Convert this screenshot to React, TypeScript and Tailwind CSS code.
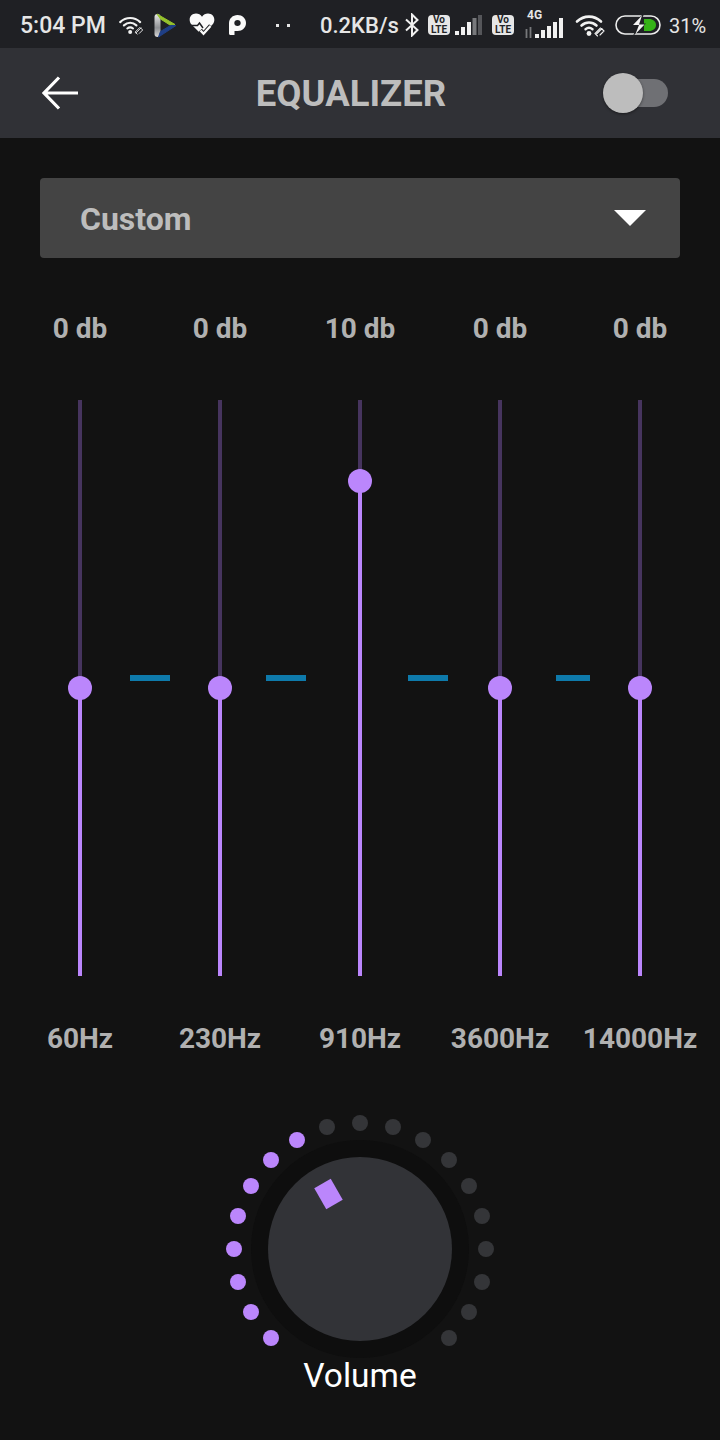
import React from "react";

const bands = [
  { db: "0 db", hz: "60Hz", top: 288 },
  { db: "0 db", hz: "230Hz", top: 288 },
  { db: "10 db", hz: "910Hz", top: 81 },
  { db: "0 db", hz: "3600Hz", top: 288 },
  { db: "0 db", hz: "14000Hz", top: 288 },
];

const dashes = ["left-[120px]", "left-[256px]", "left-[398px]", "left-[546px]"];

function Wifi({ className }: { className: string }) {
  return (
    <svg viewBox="0 0 30 24" className={className} fill="none" stroke="#f2f2f2" strokeLinecap="round">
      <path d="M2 8.5C9 2 19 2 26 8.5" strokeWidth="2.6" />
      <path d="M6.5 12.5C11 8.5 17 8.5 21.5 12.5" strokeWidth="2.6" />
      <path d="M10.5 16.2C12.8 14.4 15.2 14.4 17.5 16.2" strokeWidth="2.4" />
      <circle cx="14" cy="20.5" r="2.4" fill="#f2f2f2" stroke="none" />
      <path d="M21 21.5L27 15.5M22.5 23L20 20.5L25.5 15M25 22L29 18L26.5 15.5" strokeWidth="1.1" />
    </svg>
  );
}

function VoLte({ className }: { className: string }) {
  return (
    <div className={`flex h-5 w-[22px] shrink-0 flex-col items-center justify-center rounded-[4px] bg-[#e6e6e6] font-['Roboto',sans-serif] text-[10px] leading-[10px] font-bold text-[#222327] ${className}`}>
      <span>Vo</span>
      <span>LTE</span>
    </div>
  );
}

function Signal({ className }: { className: string }) {
  const bars = [
    { x: 0, h: 4, c: "#f0f0f0" },
    { x: 6, h: 8, c: "#f0f0f0" },
    { x: 12, h: 13, c: "#f0f0f0" },
    { x: 17.5, h: 17, c: "#77787b" },
    { x: 23, h: 20, c: "#55565a" },
  ];
  return (
    <svg viewBox="0 0 27 20" className={className}>
      {bars.map((b, i) => (
        <rect key={i} x={b.x} y={20 - b.h} width="4" height={b.h} fill={b.c} />
      ))}
    </svg>
  );
}

function StatusBar() {
  return (
    <div className="flex h-12 items-center bg-[#1f2024] pt-[2px] pl-5 font-['Roboto',sans-serif] text-[#e6e6e6]">
      <span className="mt-[1px] w-[86px] shrink-0 text-[23px] leading-none font-medium whitespace-nowrap">5:04 PM</span>
      <Wifi className="ml-3 h-5 w-[26px] shrink-0" />
      <svg viewBox="0 0 24 26" className="ml-[10px] h-[26px] w-6 shrink-0">
        <defs>
          <linearGradient id="playBar" x1="0" y1="0" x2="0" y2="1">
            <stop offset="0" stopColor="#e8e8e8" />
            <stop offset="0.6" stopColor="#8e9094" />
            <stop offset="1" stopColor="#d8d8d8" />
          </linearGradient>
        </defs>
        <rect x="0.5" y="2" width="6" height="23" rx="3" fill="url(#playBar)" />
        <path d="M3 2L21 12.5L16 13L6.5 7Z" fill="#95c22c" stroke="#95c22c" strokeLinejoin="round" />
        <path d="M22 13.5L4.5 25L6.5 19.5L16.5 13.5Z" fill="#1f3f86" stroke="#1f3f86" strokeLinejoin="round" />
      </svg>
      <svg viewBox="0 0 26 24" className="ml-[11px] h-6 w-[26px] shrink-0">
        <path d="M13 22L2.5 11.5C-1.5 6.5 1.5 0.5 7 0.5C9.5 0.5 11.5 1.7 13 3.7C14.5 1.7 16.5 0.5 19 0.5C24.5 0.5 27.5 6.5 23.5 11.5L13 22Z" fill="#fafafa" />
        <path d="M0.5 12.5H8.5L10.5 10L14 15" fill="none" stroke="#1f2024" strokeWidth="1.5" />
        <path d="M11 17.5L14.5 21.5L22 13" fill="none" stroke="#1f2024" strokeWidth="5" />
        <path d="M11.5 17.5L14.5 20.8L21.5 13" fill="none" stroke="#fafafa" strokeWidth="2.4" />
      </svg>
      <svg viewBox="0 0 17 20" className="ml-[14px] h-5 w-[17px] shrink-0">
        <path fillRule="evenodd" d="M0 8.5C0 3.5 3.8 0 8.5 0C13.3 0 17 3.5 17 8C17 12.5 13.3 16 8.7 16H5.5V20H1.5C0.6 20 0 19.4 0 18.5V8.5ZM8.5 5C6.6 5 5.3 6.3 5.3 8C5.3 9.7 6.6 11 8.5 11C10.4 11 11.7 9.7 11.7 8C11.7 6.3 10.4 5 8.5 5Z" fill="#fafafa" />
      </svg>
      <div className="ml-[30px] flex shrink-0 gap-2">
        <span className="h-[3px] w-[3px] bg-[#e6e6e6]" />
        <span className="h-[3px] w-[3px] bg-[#e6e6e6]" />
      </div>
      <span className="mt-[1px] ml-[30px] w-[80px] shrink-0 text-[22px] leading-none font-medium whitespace-nowrap">0.2KB/s</span>
      <svg viewBox="0 0 14 24" className="ml-[5px] h-6 w-[14px] shrink-0" fill="none" stroke="#f0f0f0" strokeWidth="2">
        <path d="M1 6.5L12.5 17L7 22.5V1.5L12.5 7L1 17.5" />
      </svg>
      <VoLte className="ml-[9px]" />
      <Signal className="ml-[5px] h-5 w-[27px] shrink-0" />
      <VoLte className="ml-[10px]" />
      <div className="relative ml-[11px] h-[26px] w-[39px] shrink-0">
        <span className="absolute top-[-3px] left-[2px] text-[12px] leading-3 font-bold">4G</span>
        <svg viewBox="0 0 39 20" className="absolute bottom-0 left-0 h-5 w-[39px]">
          <path d="M1.5 11V20M5.5 9V20" stroke="#77787b" strokeWidth="1.8" />
          <rect x="10" y="16" width="4" height="4" fill="#f0f0f0" />
          <rect x="16" y="12" width="4" height="8" fill="#f0f0f0" />
          <rect x="22" y="8" width="4" height="12" fill="#f0f0f0" />
          <rect x="28" y="4" width="4" height="16" fill="#f0f0f0" />
          <rect x="34" y="0" width="4" height="20" fill="#f0f0f0" />
        </svg>
      </div>
      <Wifi className="ml-[10px] h-6 w-8 shrink-0" />
      <svg viewBox="0 0 46 20" className="ml-[9px] h-5 w-[46px] shrink-0">
        <rect x="1" y="1" width="44" height="18" rx="9" fill="none" stroke="#ececec" strokeWidth="1.6" />
        <path d="M29 4H34C38 4 41 6.5 41 10C41 13.5 38 16 34 16H29Z" fill="#35b317" />
        <path d="M28 -1L16 11H22L18 21L31 8.5H25L29 -1Z" fill="#1f2024" />
        <path d="M27 0.5L18 10H24L20.5 19L29.5 9.5H24L27 0.5Z" fill="#f5f5f5" />
      </svg>
      <span className="mt-[1px] ml-2 text-[20px] leading-none whitespace-nowrap">31%</span>
    </div>
  );
}

function Header() {
  return (
    <div className="flex h-[90px] items-center bg-[#303136] font-['Roboto',sans-serif]">
      <svg viewBox="0 0 36 34" className="ml-[42px] h-[34px] w-9 shrink-0" fill="none" stroke="#ffffff" strokeWidth="3.2">
        <path d="M36 17H2M17 1.5L2 17L17 32.5" />
      </svg>
      <div className="flex-1 pt-[2px] pl-[18px] text-center text-[36.5px] leading-none font-bold text-[#bdbdbd]">EQUALIZER</div>
      <div className="relative mr-[52px] h-7 w-[62px] shrink-0 rounded-full bg-[#6f7074]">
        <div className="absolute top-[-6px] left-[-3px] h-10 w-10 rounded-full bg-[#bdbdbd] shadow-[0_1px_3px_rgba(0,0,0,0.45)]" />
      </div>
    </div>
  );
}

function Slider({ top }: { top: number }) {
  return (
    <div className="relative flex h-[576px] w-1 flex-col">
      <div className="bg-[#46345e]" style={{ height: top }} />
      <div className="flex-1 bg-[#bb86fc]" />
      <div
        className="absolute left-[-10px] h-6 w-6 -translate-y-1/2 rounded-full bg-[#bb86fc]"
        style={{ top }}
      />
    </div>
  );
}

function Dial() {
  const dots = Array.from({ length: 19 }, (_, i) => {
    const a = ((225 - i * 15) * Math.PI) / 180;
    return {
      left: 135 + 126 * Math.cos(a),
      top: 135 - 126 * Math.sin(a),
      on: i < 8,
    };
  });
  return (
    <div className="relative h-[270px] w-[270px]">
      {dots.map((d, i) => (
        <span
          key={i}
          className={`absolute h-4 w-4 -translate-x-1/2 -translate-y-1/2 rounded-full ${d.on ? "bg-[#bb86fc]" : "bg-[#343538]"}`}
          style={{ left: d.left, top: d.top }}
        />
      ))}
      <div className="absolute top-[26px] left-[26px] flex h-[218px] w-[218px] items-center justify-center rounded-full bg-[#0e0e0e]">
        <div className="relative h-[184px] w-[184px] rounded-full bg-[#323337]">
          <div className="absolute top-[25px] left-[51px] h-6 w-[19px] -rotate-30 bg-[#bb86fc]" />
        </div>
      </div>
    </div>
  );
}

export default function App() {
  return (
    <div className="flex h-[1440px] w-[720px] flex-col overflow-hidden bg-[#121212] font-['Roboto',sans-serif]">
      <StatusBar />
      <Header />
      <div className="mx-10 mt-10 flex h-20 items-center justify-between rounded-[4px] bg-[#444444] pr-[34px] pl-10">
        <span className="pt-[2px] text-[32px] leading-none font-bold text-[#bdbdbd]">Custom</span>
        <svg viewBox="0 0 32 16" className="h-4 w-8">
          <path d="M0 0H32L16 16Z" fill="#ffffff" />
        </svg>
      </div>
      <div className="relative mx-[10px] mt-[53px] grid grid-cols-5">
        {bands.map((b) => (
          <div key={b.hz} className="flex flex-col items-center">
            <span className="h-9 text-[28px] leading-9 font-bold text-[#b0b0b0]">{b.db}</span>
            <div className="mt-[53px]">
              <Slider top={b.top} />
            </div>
            <span className="mt-[45px] h-9 text-[28px] leading-9 font-bold whitespace-nowrap text-[#b0b0b0]">{b.hz}</span>
          </div>
        ))}
        {dashes.map((d, i) => (
          <span
            key={d}
            className={`absolute top-[364px] h-[6px] bg-[#0e7aab] ${d} ${i === 3 ? "w-[34px]" : "w-10"}`}
          />
        ))}
      </div>
      <div className="mt-[57px] flex flex-col items-center">
        <Dial />
        <span className="mt-[-28px] text-[33.5px] leading-10 text-white">Volume</span>
      </div>
    </div>
  );
}
